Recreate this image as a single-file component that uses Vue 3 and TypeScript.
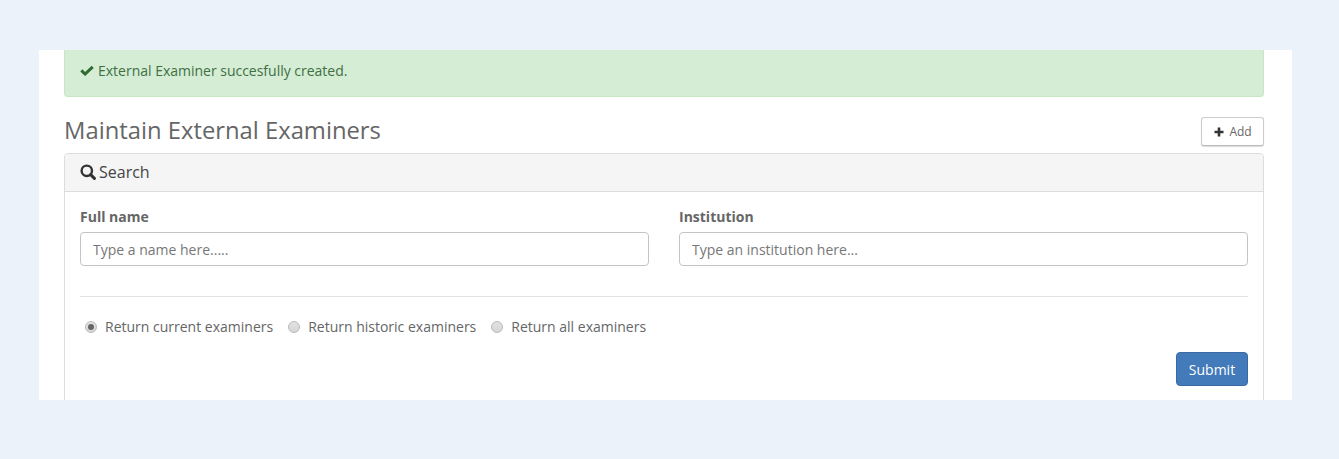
<script setup lang="ts">
const options: { label: string; checked: boolean }[] = [
  { label: 'Return current examiners', checked: true },
  { label: 'Return historic examiners', checked: false },
  { label: 'Return all examiners', checked: false },
]
</script>

<template>
  <div class="page">
    <main class="sheet">
      <div class="alert">
        <svg class="check" viewBox="0 0 14 11" width="14" height="11" aria-hidden="true">
          <path d="M1.3 5.4 L5.1 9 L12.7 1.8" fill="none" stroke="#2f6b33" stroke-width="3" />
        </svg>
        <span>External Examiner succesfully created.</span>
      </div>
      <div class="title-row">
        <h1>Maintain External Examiners</h1>
        <button class="add" type="button">
          <svg viewBox="0 0 10 10" width="10" height="10" aria-hidden="true">
            <path d="M5 0.5 V9.5 M0.5 5 H9.5" stroke="#333" stroke-width="2.6" fill="none" />
          </svg>
          <span>Add</span>
        </button>
      </div>
      <section class="panel">
        <header class="panel-head">
          <svg viewBox="0 0 16 16" width="16" height="16" aria-hidden="true">
            <circle cx="6.8" cy="6.8" r="5.2" fill="none" stroke="#333" stroke-width="2.4" />
            <path d="M10.6 10.6 L14.4 14.4" stroke="#333" stroke-width="3" stroke-linecap="round" />
          </svg>
          <span>Search</span>
        </header>
        <div class="panel-body">
          <div class="fields">
            <label class="field">
              <span class="field-label">Full name</span>
              <input type="text" placeholder="Type a name here....." />
            </label>
            <label class="field">
              <span class="field-label">Institution</span>
              <input type="text" placeholder="Type an institution here..." />
            </label>
          </div>
          <hr />
          <div class="radios">
            <label v-for="o in options" :key="o.label" class="radio">
              <span class="dot" :class="{ on: o.checked }"></span>
              <span>{{ o.label }}</span>
            </label>
          </div>
          <div class="actions">
            <button class="submit" type="button">Submit</button>
          </div>
        </div>
      </section>
    </main>
  </div>
</template>

<style>
html, body { margin: 0; background: #ecf2fa; }
</style>

<style scoped>
.page {
  height: 459px;
  box-sizing: border-box;
  padding: 50px 47px 59px 39px;
  background: #ecf2fa;
  font-family: "Open Sans", sans-serif;
  font-size: 14px;
  line-height: 20px;
  color: #666;
  overflow: hidden;
}
.sheet {
  height: 350px;
  box-sizing: border-box;
  padding: 0 28px 0 25px;
  background: #fff;
  overflow: hidden;
}
.alert {
  height: 47px;
  box-sizing: border-box;
  padding: 0 15px 5px;
  display: flex;
  align-items: center;
  gap: 4px;
  background: #d4edd4;
  border: 1px solid #c9e6c4;
  border-top: 0;
  border-radius: 0 0 4px 4px;
  color: #3f6f44;
  letter-spacing: -0.01px;
}
.check { flex: none; }
.title-row {
  height: 56px;
  display: flex;
  justify-content: space-between;
  align-items: flex-end;
  padding-bottom: 7px;
  box-sizing: border-box;
}
h1 {
  margin: 0 0 1px;
  font-size: 23.8px;
  font-weight: 400;
  line-height: 30px;
  color: #666;
}
.add {
  width: 63px;
  height: 29px;
  padding: 0;
  display: flex;
  align-items: center;
  justify-content: center;
  gap: 6px;
  background: #fff;
  border: 1px solid #ccc;
  border-bottom-color: #bbb;
  border-radius: 3px;
  box-shadow: 0 1px 1px rgba(0, 0, 0, 0.15);
  font: 12px "Open Sans", sans-serif;
  letter-spacing: -0.1px;
  color: #666;
}
.panel {
  border: 1px solid #ddd;
  border-radius: 4px 4px 0 0;
  height: 260px;
}
.panel-head {
  height: 38px;
  box-sizing: border-box;
  padding: 0 15px 1px;
  display: flex;
  align-items: center;
  gap: 3px;
  background: #f5f5f5;
  border-bottom: 1px solid #ddd;
  border-radius: 3px 3px 0 0;
  font-size: 16px;
  color: #444;
}
.panel-body { padding: 15px 15px 0; }
.fields {
  display: grid;
  grid-template-columns: 1fr 1fr;
  column-gap: 30px;
}
.field { display: block; }
.field-label {
  display: block;
  margin-bottom: 5px;
  font-weight: 700;
  color: #666;
}
input {
  display: block;
  width: 100%;
  height: 34px;
  box-sizing: border-box;
  padding: 6px 12px;
  border: 1px solid #c4c4c4;
  border-radius: 4px;
  background: #fff;
  font: 14px "Open Sans", sans-serif;
  color: #666;
  outline: none;
}
input::placeholder { color: #777; opacity: 1; }
hr {
  margin: 30px 0 0;
  border: 0;
  border-top: 1px solid #e2e2e2;
}
.radios {
  display: flex;
  gap: 15px;
  padding: 20px 0 0 5px;
}
.radio {
  display: flex;
  align-items: center;
  gap: 8px;
}
.dot {
  width: 12px;
  height: 12px;
  box-sizing: border-box;
  border-radius: 50%;
  border: 1px solid #bbb;
  background: linear-gradient(#e2e2e2, #d6d6d6);
  display: flex;
  align-items: center;
  justify-content: center;
}
.dot.on::after {
  content: "";
  width: 6px;
  height: 6px;
  border-radius: 50%;
  background: #666;
}
.actions {
  display: flex;
  justify-content: flex-end;
  padding-top: 15px;
}
.submit {
  width: 72px;
  height: 34px;
  padding: 0;
  background: #437ab9;
  border: 1px solid #3a6aa5;
  border-radius: 4px;
  font: 14px "Open Sans", sans-serif;
  color: #fff;
}
</style>
